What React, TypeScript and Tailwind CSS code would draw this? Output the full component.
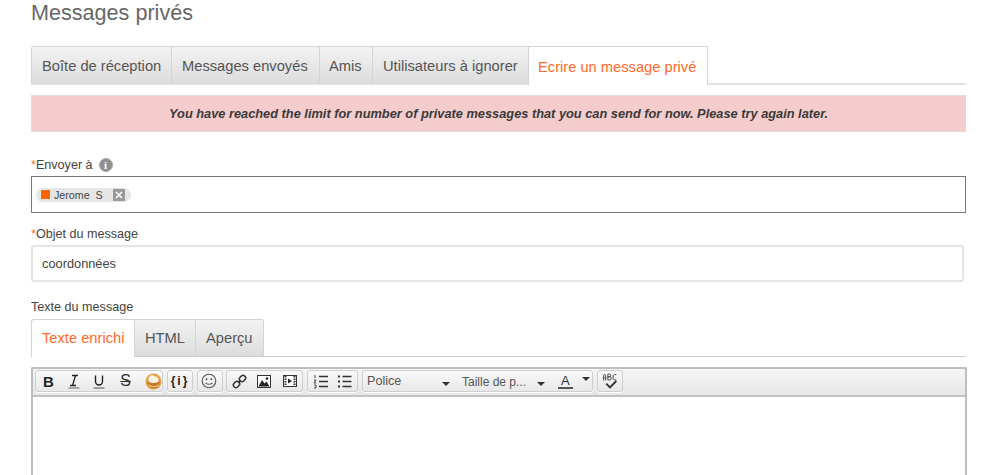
const FONT = "font-['Liberation_Sans',Arial,sans-serif]";

const TAB = "flex h-full items-center border-r border-[#d4d4d4] bg-gradient-to-b from-[#f3f3f3] to-[#dcdcdc] text-[#555] last:border-r-0";

function ToolGroup({ children, className = "" }: { children: React.ReactNode; className?: string }) {
  return (
    <div className={`flex h-[22px] items-center rounded-[3px] border border-[#cfcfcf] bg-gradient-to-b from-[#fafafa] to-[#e8e8e8] shadow-[0_1px_0_#fff] ${className}`}>
      {children}
    </div>
  );
}

function ToolBtn({ children, className = "w-[25px]" }: { children: React.ReactNode; className?: string }) {
  return <div className={`flex h-full shrink-0 items-center justify-center ${className}`}>{children}</div>;
}

function Caret({ className = "" }: { className?: string }) {
  return <span className={`block h-0 w-0 border-x-[4px] border-t-[4px] border-x-transparent border-t-[#333] ${className}`} />;
}

function Required() {
  return <span className="text-[#ff6a2a]">*</span>;
}

export default function App() {
  return (
    <div className={`${FONT} flex h-[475px] w-[999px] flex-col overflow-hidden bg-white pl-[31px] text-[#444]`}>
      <h1 className="h-[24px] text-[21.6px] leading-[26px] text-[#666]">Messages privés</h1>

      {/* top tabs */}
      <div className="mt-[22px] flex h-[39px] w-[935px] border-b-2 border-[#e2e2e2] text-[14.7px]">
        <div className="flex h-[38px] overflow-hidden rounded-tl-[3px] border-t border-l border-[#d4d4d4]">
          <div className={`${TAB} w-[140px] pl-[10px] pt-[2px]`}>Boîte de réception</div>
          <div className={`${TAB} w-[148px] pl-[10px] pt-[2px]`}>Messages envoyés</div>
          <div className={`${TAB} w-[53px] pl-[9px] pt-[2px]`}>Amis</div>
          <div className={`${TAB} w-[155px] pl-[10px] pt-[2px]`}>Utilisateurs à ignorer</div>
        </div>
        <div className="z-10 flex h-[39px] w-[180px] items-center border-x border-t border-[#d4d4d4] bg-white pl-[9px] pt-[2px] text-[#ff6a2a]">
          Ecrire un message privé
        </div>
      </div>

      {/* alert */}
      <div className="mt-[10px] flex h-[37px] w-[935px] items-center justify-center border border-[#ddd] bg-[#f4cccc] text-[12.8px] font-bold italic text-[#3a3a3a]">
        You have reached the limit for number of private messages that you can send for now. Please try again later.
      </div>

      {/* recipient */}
      <div className="mt-[26px] flex h-[14px] items-center text-[12.6px] leading-[14px]">
        <Required />
        <span>Envoyer à</span>
        <span className="ml-[6px] flex h-[14px] w-[14px] items-center justify-center rounded-full border border-[#aaa] bg-[#8f8f8f] font-['Liberation_Serif',serif] text-[11px] font-bold leading-none text-white">
          i
        </span>
      </div>
      <div className="mt-[4px] flex h-[37px] w-[935px] items-center border border-[#777] pl-[4px]">
        <div className="flex h-[14px] w-[95px] items-center rounded-full bg-[#e6e6e6] pl-[5px]">
          <span className="mb-[1px] h-[9px] w-[9px] shrink-0 bg-[#ff6600]" />
          <span className="ml-[4px] mt-[2px] whitespace-pre text-[10.7px] leading-none text-[#444]">Jerome  S</span>
          <span className="ml-[10px] flex h-[12px] w-[12px] shrink-0 items-center justify-center bg-[#999]">
            <svg width="8" height="8" viewBox="0 0 8 8">
              <path d="M1 1l6 6M7 1L1 7" stroke="#fff" strokeWidth="1.5" />
            </svg>
          </span>
        </div>
      </div>

      {/* subject */}
      <div className="mt-[14px] h-[14px] text-[12.6px] leading-[14px]">
        <Required />
        <span>Objet du message</span>
      </div>
      <div className="mt-[4px] flex h-[37px] w-[933px] items-center rounded-[3px] border-2 border-[#e4e4e4] pl-[9px] text-[12.8px] text-[#444]">
        coordonnées
      </div>

      {/* body */}
      <div className="mt-[18px] h-[14px] text-[12.6px] leading-[14px]">Texte du message</div>
      <div className="mt-[5px] flex h-[38px] w-[935px] border-b border-[#ccc] text-[14.7px]">
        <div className="z-10 flex h-[38px] w-[104px] items-center rounded-tl-[3px] border-t border-r border-l border-[#d4d4d4] bg-white pl-[10px] text-[#ff6a2a]">
          Texte enrichi
        </div>
        <div className="flex h-[37px] overflow-hidden rounded-tr-[3px] border-t border-r border-[#d4d4d4]">
          <div className={`${TAB} w-[61px] pl-[10px]`}>HTML</div>
          <div className={`${TAB} w-[67px] pl-[10px]`}>Aperçu</div>
        </div>
      </div>

      {/* editor */}
      <div className="mt-[10px] flex w-[936px] flex-1 flex-col rounded-t-[2px] border-x-2 border-t-2 border-x-[#bdbdbd] border-t-[#bdbdbd]">
        <div className="flex h-[28px] shrink-0 items-start gap-[4px] border-b-2 border-[#c2c2c2] bg-gradient-to-b from-[#f6f6f6] to-[#e6e6e6] pl-[2px] pt-[1px]">
          <ToolGroup className="w-[128px]">
            <ToolBtn><span className="text-[15px] font-bold leading-none text-[#222]">B</span></ToolBtn>
            <ToolBtn>
              <svg width="12" height="15" viewBox="0 0 12 15" fill="none" stroke="#222">
                <path d="M4 1.500h6M2 11.500h6M7.500 1.500 4.500 11.500" strokeWidth="1.300" />
                <path d="M0.500 14h11" stroke="#666" />
              </svg>
            </ToolBtn>
            <ToolBtn className="w-[26px]">
              <svg width="12" height="15" viewBox="0 0 12 15" fill="none" stroke="#222">
                <path d="M2.500 1.500v6a3.500 3.500 0 0 0 7 0v-6" strokeWidth="1.400" />
                <path d="M0.500 14h11" stroke="#555" />
              </svg>
            </ToolBtn>
            <ToolBtn className="w-[27px]"><span className="text-[16px] leading-none text-[#333] line-through">S</span></ToolBtn>
            <ToolBtn>
              <svg className="ml-[3px]" width="17" height="17" viewBox="0 0 18 18">
                <circle cx="9" cy="9" r="8.500" fill="#e3a34d" />
                <circle cx="9" cy="10" r="6.500" fill="#c47a24" />
                <path d="M3.500 8c0-3 2-5.500 4.500-5.500 1 0 1 1 2 1 2.500 0 4.500 2 4.500 4.500 0 2-2.500 2.500-5.500 2.500S3.500 10 3.500 8z" fill="#fdf3e0" />
                <path d="M3.500 12.500c2.500 2.500 8.500 2.500 11 0" stroke="#f3c98a" strokeWidth="1.200" fill="none" />
              </svg>
            </ToolBtn>
          </ToolGroup>
          <ToolGroup className="w-[26px] justify-center">
            <span className="whitespace-pre text-[12px] font-bold leading-none tracking-[2px] text-[#222]">{"{i}"}</span>
          </ToolGroup>
          <ToolGroup className="w-[26px] justify-center pr-[2px]">
            <svg width="16" height="16" viewBox="0 0 16 16" fill="none" stroke="#555" strokeWidth="1.100">
              <circle cx="8" cy="8" r="6.800" />
              <circle cx="5.600" cy="6.200" r="0.900" fill="#444" stroke="none" />
              <circle cx="10.400" cy="6.200" r="0.900" fill="#444" stroke="none" />
              <path d="M4.500 9.800c1 2 6 2 7 0" />
            </svg>
          </ToolGroup>
          <ToolGroup className="-ml-[1px] w-[77px]">
            <ToolBtn className="w-[24px]">
              <svg width="15" height="15" viewBox="0 0 15 15" fill="none" stroke="#333" strokeWidth="1.500">
                <path d="M6.200 8.800 8.800 6.200" />
                <path d="M8 3.400l1.400-1.400a2.300 2.300 0 0 1 3.200 0l.4.400a2.300 2.300 0 0 1 0 3.200L11.600 7a2.300 2.300 0 0 1-3.200 0L8 6.600a2.300 2.300 0 0 1 0-3.200z" />
                <path d="M2 9.400 3.400 8a2.300 2.300 0 0 1 3.200 0l.4.400a2.300 2.300 0 0 1 0 3.200L5.600 13a2.300 2.300 0 0 1-3.200 0L2 12.600a2.300 2.300 0 0 1 0-3.200z" />
              </svg>
            </ToolBtn>
            <ToolBtn className="w-[26px]">
              <svg width="14" height="13" viewBox="0 0 14 13">
                <rect x="0.500" y="0.500" width="13" height="12" fill="#fff" stroke="#333" />
                <path d="M1.500 11.500 5 5l2.500 3.500L9.500 6.500l3 5z" fill="#222" />
                <circle cx="10" cy="3.500" r="1.300" fill="#222" />
              </svg>
            </ToolBtn>
            <ToolBtn>
              <svg width="14" height="12" viewBox="0 0 14 12">
                <rect x="0.500" y="0.500" width="13" height="11" fill="#fff" stroke="#333" />
                <path d="M2.500 1v10M11.500 1v10" stroke="#333" strokeDasharray="1.500 1" strokeWidth="2" />
                <path d="M5 3.500 9 6 5 8.500z" fill="#222" />
              </svg>
            </ToolBtn>
          </ToolGroup>
          <ToolGroup className="w-[51px]">
            <ToolBtn className="w-[24px]">
              <svg width="15" height="15" viewBox="0 0 15 15" stroke="#333" strokeWidth="1.300">
                <path d="M6 2.500h9M6 7.500h9M6 12.500h9" />
                <path d="M2 1v3M1 6h2L1 9h2.300M1 11h2v3H1" strokeWidth="0.900" fill="none" />
              </svg>
            </ToolBtn>
            <ToolBtn>
              <svg width="15" height="15" viewBox="0 0 15 15" stroke="#333" strokeWidth="1.300">
                <path d="M5.500 2.500h9M5.500 7.500h9M5.500 12.500h9" />
                <path d="M1 2.500h2M1 7.500h2M1 12.500h2" strokeWidth="2" />
              </svg>
            </ToolBtn>
          </ToolGroup>
          <ToolGroup className="w-[231px] text-[12.6px] text-[#555]">
            <div className="flex h-full w-[95px] items-center justify-between pl-[4px] pr-[8px]">
              <span className="mt-[1px]">Police</span>
              <Caret className="mt-[5px]" />
            </div>
            <div className="flex h-full w-[95px] items-center justify-between pl-[4px] pr-[8px]">
              <span className="mt-[1px] text-[12px]">Taille de p...</span>
              <Caret className="mt-[5px]" />
            </div>
            <div className="flex h-full flex-1 items-center pl-[5px]">
              <span className="border-b-2 border-[#555] px-[3px] text-[13px] leading-[13px] text-[#333]">A</span>
              <Caret className="mb-[4px] ml-[9px]" />
            </div>
          </ToolGroup>
          <ToolGroup className="w-[26px] justify-center">
            <svg width="17" height="17" viewBox="0 0 16 16" fill="none">
              <path d="M1.500 7V2.500l1-1.500 1 1.500V7M1.500 4.500h2M5.500 1h1.500a1 1 0 0 1 0 2.500H5.500H7.300a1.300 1.300 0 0 1 0 3H5.500zM13.500 1.500h-2l-1 1v3l1 1h2" stroke="#444" strokeWidth="0.900" />
              <path d="M4 10l3.500 3.500 6-6" stroke="#333" strokeWidth="1.800" />
            </svg>
          </ToolGroup>
        </div>
        <div className="flex-1 bg-white" />
      </div>
    </div>
  );
}
